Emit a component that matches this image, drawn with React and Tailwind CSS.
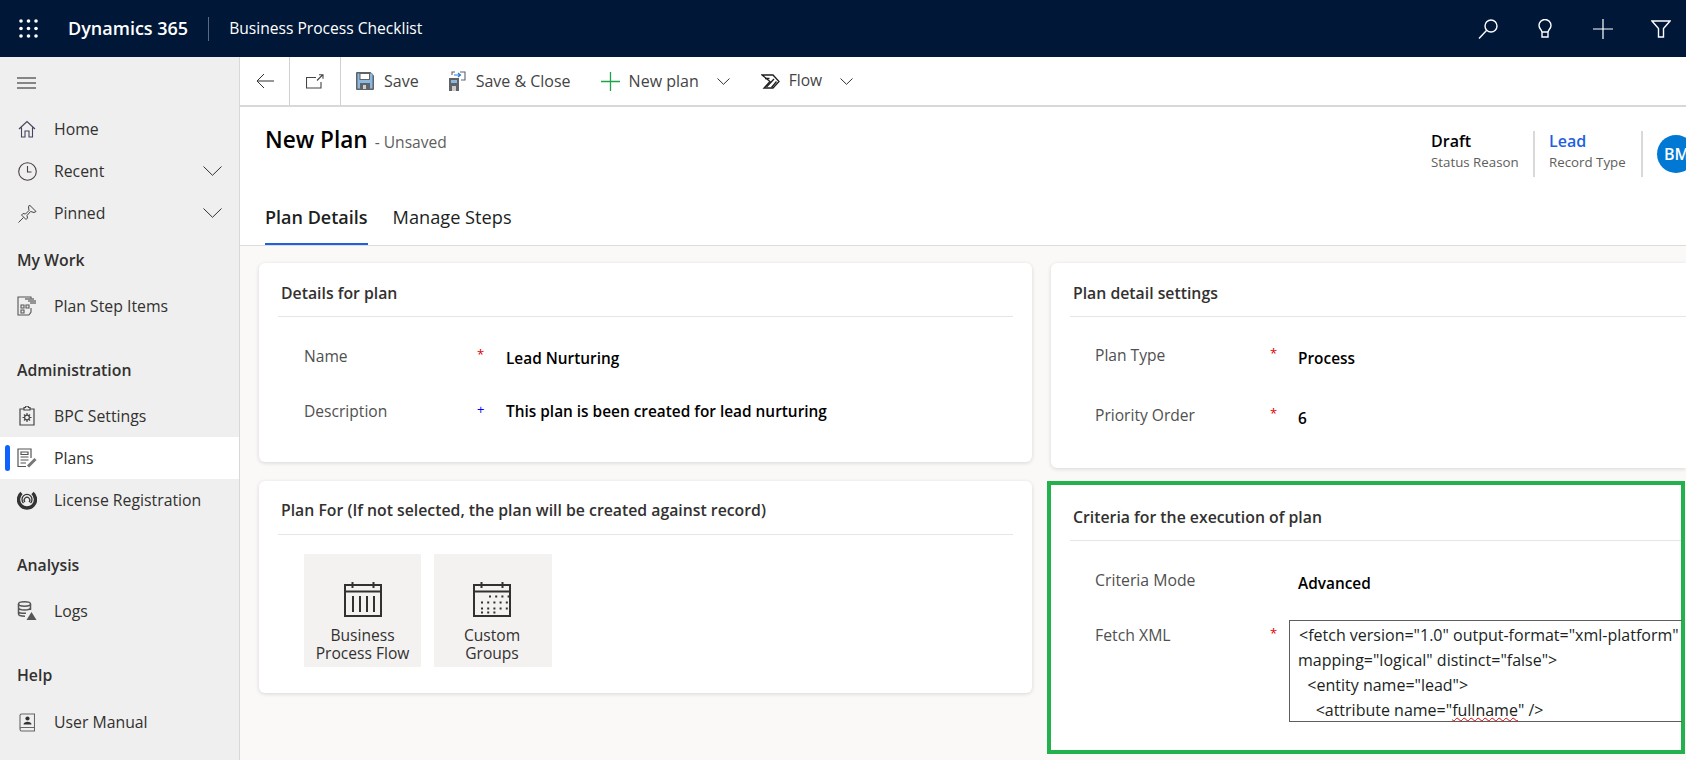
import React from "react";

const F = { fontFamily: '"Open Sans","Noto Sans",sans-serif' };

function Chevron({ w, h }) {
  return (
    <svg width={w} height={h} viewBox={`0 0 ${w} ${h}`} fill="none" stroke="#323130" strokeWidth="1">
      <path d={`M0.5 0.5L${w / 2} ${h - 0.7}L${w - 0.5} 0.5`} />
    </svg>
  );
}

function Calendar({ dots }) {
  return (
    <svg width="38" height="35" viewBox="0 0 38 35" fill="none" stroke="#323130" strokeWidth="2">
      <rect x="1" y="3" width="36" height="31" />
      <path d="M1 9.5H37M8.5 0V6M29.5 0V6" />
      {dots ? (
        <path strokeDasharray="2 4.2" d="M16 14.5H36M8 20.5H36M8 26.5H36M8 30.5H24" />
      ) : (
        <path d="M9 14V30M16 14V30M23 14V30M30 14V30" />
      )}
    </svg>
  );
}

const NavIcon = ({ children }) => (
  <span className="w-[20px] h-[20px] flex items-center justify-center text-[#323130]">{children}</span>
);

function NavItem({ icon, label, chevron, active }) {
  return (
    <div className={`relative flex items-center h-[42px] pl-[17px] pr-[17px] ${active ? "bg-white" : ""}`}>
      {active && <span className="absolute left-[5px] top-[8px] w-[5px] h-[26px] rounded-sm bg-[#0f62fe]" />}
      <NavIcon>{icon}</NavIcon>
      <span className="ml-[17px] mt-[2px] text-[15.8px] text-[#323130] flex-1">{label}</span>
      {chevron && <Chevron w={19} h={10} />}
    </div>
  );
}

const NavHead = ({ children, className = "" }) => (
  <div className={`pl-[17px] text-[15.8px] leading-[24px] font-semibold text-[#323130] ${className}`}>{children}</div>
);

const CardTitle = ({ children, className = "" }) => (
  <div className={`ml-[19px] pl-[3px] border-b border-[#e6e6e6] font-semibold text-[15.8px] leading-[24px] text-[#323130] ${className}`}>
    {children}
  </div>
);

function Row({ label, req, value, labelW, starW, labelClass = "text-[15.6px]", valueClass = "mt-[3px]" }) {
  return (
    <div className="flex items-start">
      <span style={{ width: labelW }} className={`shrink-0 leading-[24px] text-[#505050] ${labelClass}`}>{label}</span>
      <span style={{ width: starW }} className={`shrink-0 text-[13px] leading-[13px] mt-[4px] ${req === "+" ? "text-[#0000ff]" : "text-[#e00000]"}`}>
        {req || ""}
      </span>
      <span className={`text-[15.4px] leading-[24px] font-semibold text-black ${valueClass}`}>{value}</span>
    </div>
  );
}

export default function App() {
  return (
    <div style={F} className="w-[1686px] h-[760px] overflow-hidden flex flex-col bg-[#faf9f8]">
      {/* Top bar */}
      <header className="h-[57px] shrink-0 bg-[#001737] flex items-center text-white">
        <svg className="ml-[19px]" width="19" height="19" viewBox="0 0 19 19" fill="white">
          {[2, 9.5, 17].map((y) =>
            [2, 9.5, 17].map((x) => <circle key={`${x}-${y}`} cx={x} cy={y} r="1.8" />)
          )}
        </svg>
        <span className="ml-[30px] text-[18px] font-semibold">Dynamics 365</span>
        <span className="ml-[20px] w-px h-[24px] bg-[#5a6a80]" />
        <span className="ml-[20px] text-[15.6px]">Business Process Checklist</span>
        <div className="ml-auto flex items-center pr-[15px]">
          <svg width="20" height="20" viewBox="0 0 20 20" fill="none" stroke="white" strokeWidth="1.4">
            <circle cx="13" cy="7" r="6" />
            <path d="M8.5 11.5L1 19.5" />
          </svg>
          <svg className="ml-[40px]" width="14" height="19" viewBox="0 0 14 19" fill="none" stroke="white" strokeWidth="1.4">
            <path d="M4 13C3.5 10.5 1 9.5 1 6.5A6 6 0 0 1 13 6.5C13 9.5 10.5 10.5 10 13M4 13H10M4 13V18H10V13" />
          </svg>
          <svg className="ml-[41px]" width="20" height="20" viewBox="0 0 20 20" stroke="white" strokeWidth="1.2">
            <path d="M0 10H20M10 0V20" />
          </svg>
          <svg className="ml-[38px]" width="20" height="18" viewBox="0 0 20 18" fill="none" stroke="white" strokeWidth="1.4">
            <path d="M1 1H19L12.5 8.5V17H7.5V8.5Z" />
          </svg>
        </div>
      </header>

      <div className="flex-1 flex min-h-0">
        {/* Sidebar */}
        <aside className="w-[240px] shrink-0 bg-[#efefef] border-r border-[#d8d8d8] flex flex-col">
          <div className="h-[51px] pl-[17px] flex items-center">
            <svg width="19" height="12" viewBox="0 0 19 12" stroke="#201f1e" strokeWidth="1.1">
              <path d="M0 1H19M0 6H19M0 11H19" />
            </svg>
          </div>
          <NavItem
            label="Home"
            icon={
              <svg width="18" height="18" viewBox="0 0 18 18" fill="none" stroke="#4a4060" strokeWidth="1.1">
                <path d="M1 9L9 1.5L17 9M3.5 7.5V17H7V11H11V17H14.5V7.5" />
              </svg>
            }
          />
          <NavItem
            label="Recent"
            chevron
            icon={
              <svg width="19" height="19" viewBox="0 0 19 19" fill="none" stroke="#4a4040" strokeWidth="1.1">
                <circle cx="9.5" cy="9.5" r="8.8" />
                <path d="M9.5 4V10H13.5" />
              </svg>
            }
          />
          <NavItem
            label="Pinned"
            chevron
            icon={
              <svg width="19" height="19" viewBox="0 0 19 19" fill="none" stroke="#4a4040" strokeWidth="1">
                <path d="M11.5 1L18 7.5L16 8.5L12.5 7.5L9 11.5L9.5 14L8 15.5L3.5 11L5 9.5L7.5 10L11 6.5L10.5 3Z" />
                <path d="M5.5 13.5L0.5 18.5" />
              </svg>
            }
          />
          <NavHead className="mt-[14px] mb-[13px]">My Work</NavHead>
          <NavItem
            label="Plan Step Items"
            icon={
              <svg width="20" height="20" viewBox="0 0 20 20" fill="none" stroke="#555" strokeWidth="1.1">
                <path d="M12 19H1V1H14V3M14 12V16L12 19" />
                <path d="M4 9H7V12H4ZM9 9H12V12H9ZM4 14H7V17H4Z" />
                <path d="M8 3H17M11 5H19M13 7H19" strokeWidth="1.4" stroke="#777" />
              </svg>
            }
          />
          <NavHead className="mt-[31px] mb-[13px]">Administration</NavHead>
          <NavItem
            label="BPC Settings"
            icon={
              <svg width="16" height="20" viewBox="0 0 16 20" fill="none" stroke="#444" strokeWidth="1.2">
                <path d="M5 3H1V19H15V3H11M5 4V1.5H6.5A1.5 1.5 0 0 1 9.5 1.5H11V4Z" />
                <circle cx="8" cy="11.5" r="2.4" />
                <path d="M8 7V9M8 14V16M3.5 11.5H5.5M10.5 11.5H12.5M5 8.5L6.3 9.8M9.7 13.2L11 14.5M11 8.5L9.7 9.8M6.3 13.2L5 14.5" />
              </svg>
            }
          />
          <NavItem
            active
            label="Plans"
            icon={
              <svg width="20" height="20" viewBox="0 0 20 20" fill="none" stroke="#555" strokeWidth="1.2">
                <path d="M14 10V1H1V18.5H9" />
                <path d="M4 4H11V6.5H4ZM3.5 9H11.5M3.5 12H11.5M3.5 15H9" />
                <path d="M11 18.5L18.5 11" strokeWidth="3" stroke="#777" />
              </svg>
            }
          />
          <NavItem
            label="License Registration"
            icon={
              <svg width="20" height="20" viewBox="0 0 20 20" fill="none" stroke="#333">
                <path d="M4.5 3A8.5 8.5 0 1 0 15.5 3" strokeWidth="3.4" />
                <path d="M6.5 13A5 5 0 1 1 13.5 13" strokeWidth="1.3" />
                <path d="M8 12A2.8 2.8 0 1 1 12 12" strokeWidth="1.2" />
              </svg>
            }
          />
          <NavHead className="mt-[32px] mb-[13px]">Analysis</NavHead>
          <NavItem
            label="Logs"
            icon={
              <svg width="20" height="20" viewBox="0 0 20 20" fill="none" stroke="#555" strokeWidth="1.5">
                <ellipse cx="7.5" cy="3" rx="6" ry="2.2" />
                <path d="M1.5 3V13C1.5 14.5 4.5 15.2 8 15.2M13.5 3V9M1.5 6.5C1.5 8 4.5 9 7.5 9S13.5 8 13.5 6.5M1.5 10.5C1.5 12 4.5 12.5 9 12.2" />
                <path d="M14.5 11L19.5 19H9.5Z" fill="#555" stroke="none" />
              </svg>
            }
          />
          <NavHead className="mt-[31px] mb-[14px]">Help</NavHead>
          <NavItem
            label="User Manual"
            icon={
              <svg width="16" height="19" viewBox="0 0 16 19" fill="none" stroke="#666" strokeWidth="1.1">
                <path d="M2.5 1H15.5V18H2.5C0.5 18 0.5 14.5 2.5 14.5H15.5M1 16V2.5C1 1.5 1.8 1 2.5 1" />
                <circle cx="8.5" cy="5.5" r="2.1" fill="#333" stroke="none" />
                <path d="M4.5 11.5C4.5 7.8 12.5 7.8 12.5 11.5Z" fill="#333" stroke="none" />
              </svg>
            }
          />
        </aside>

        {/* Main */}
        <main className="flex-1 min-w-0 flex flex-col">
          <div className="h-[50px] shrink-0 bg-white border-b-2 border-[#d8d8d8] flex items-center text-[16px] text-[#444]">
            <div className="w-[50px] h-full flex items-center pl-[16px] border-r border-[#d0d0d0]">
              <svg width="18" height="16" viewBox="0 0 18 16" fill="none" stroke="#323130" strokeWidth="1">
                <path d="M18 8H1M8 1L1 8L8 15" />
              </svg>
            </div>
            <div className="w-[51px] h-full flex items-center pl-[16px] border-r border-[#d0d0d0]">
              <svg width="18" height="15" viewBox="0 0 18 15" fill="none" stroke="#444" strokeWidth="1.1">
                <path d="M10 3.5H0.5V14H15V8M11 6.5L16.5 1M13 0.7H17V4.7" />
              </svg>
            </div>
            <svg className="ml-[15px]" width="18" height="18" viewBox="0 0 18 18">
              <path d="M1 0H14.5L18 3.5V17A1 1 0 0 1 17 18H1A1 1 0 0 1 0 17V1A1 1 0 0 1 1 0Z" fill="#5f6368" />
              <rect x="1.5" y="1.5" width="15" height="15" fill="#8ab8de" />
              <rect x="4" y="1.5" width="9.5" height="6" fill="#fff" stroke="#5f6368" strokeWidth="1" />
              <rect x="4" y="11" width="10" height="6" fill="#5f6368" />
              <rect x="7" y="13" width="3" height="4" fill="#ccc" />
            </svg>
            <span className="ml-[10px]">Save</span>
            <svg className="ml-[29px]" width="18" height="20" viewBox="0 0 18 20">
              <rect x="1" y="7" width="10" height="13" fill="#5f6368" />
              <rect x="3" y="9" width="6" height="3" fill="#8ab8de" />
              <rect x="4" y="15" width="4" height="5" fill="#ccc" />
              <path d="M4 4V1H7M12 1H17V9H13" fill="none" stroke="#5f6368" strokeWidth="1.1" />
              <path d="M6 4H12M10 2L12.5 4L10 6" fill="none" stroke="#2b7cd3" strokeWidth="1.2" />
            </svg>
            <span className="ml-[10px]">Save &amp; Close</span>
            <svg className="ml-[30px]" width="19" height="19" viewBox="0 0 19 19" stroke="#1fa34a" strokeWidth="1.3">
              <path d="M0 9.5H19M9.5 0V19" />
            </svg>
            <span className="ml-[9px]">New plan</span>
            <span className="ml-[18px]"><Chevron w={13} h={7} /></span>
            <svg className="ml-[31px]" width="19" height="15" viewBox="0 0 19 15" fill="none" stroke="#201f1e" strokeWidth="1.3">
              <path d="M1 1H12L18 7.5L12 14H3L9 7.5Z" />
              <path d="M4 4.5H8.5M13 5L5.5 13M15.5 7.5L10.5 13.5" />
            </svg>
            <span className="ml-[9px] text-[15.6px]">Flow</span>
            <span className="ml-[18px]"><Chevron w={13} h={7} /></span>
          </div>

          <div className="h-[139px] shrink-0 bg-white border-b border-[#dcdcdc] relative">
            <div className="pl-[25px] pt-[18px] flex items-baseline leading-[30px]">
              <span className="text-[22.6px] font-semibold text-black">New Plan</span>
              <span className="ml-[7px] text-[15.6px] text-[#605e5c]">- Unsaved</span>
            </div>
            <div className="absolute right-0 top-[24px] flex items-stretch w-[255px] h-[46px] overflow-hidden">
              <div className="w-[102px] shrink-0 leading-[1.2] pt-[1px]">
                <div className="text-[16px] font-semibold text-black">Draft</div>
                <div className="text-[13.3px] text-[#605e5c] mt-[4px]">Status Reason</div>
              </div>
              <div className="w-[2px] shrink-0 bg-[#d9d9d9]" />
              <div className="pl-[14px] w-[106px] shrink-0 leading-[1.2] pt-[1px]">
                <div className="text-[16px] font-semibold text-[#1f5fe0]">Lead</div>
                <div className="text-[13.3px] text-[#605e5c] mt-[4px]">Record Type</div>
              </div>
              <div className="w-[2px] shrink-0 bg-[#d9d9d9]" />
              <div className="ml-[14px] mt-[4px] w-[38px] h-[38px] rounded-full shrink-0 bg-[#0078d4] text-white font-semibold text-[16px] flex items-center pl-[7px] overflow-hidden">
                BM
              </div>
            </div>
            <div className="absolute left-[25px] bottom-0 flex gap-[25px] text-[18.2px] leading-[27px] text-[#201f1e]">
              <div className="h-[46px] pt-[5px] font-semibold text-[18px] border-b-[2px] border-[#1f5fe0]">Plan Details</div>
              <div className="h-[46px] pt-[5px]">Manage Steps</div>
            </div>
          </div>

          <div className="flex-1 min-h-0 flex gap-[19px] pl-[19px] pt-[17px]">
            <div className="w-[773px] shrink-0 flex flex-col gap-[19px]">
              <section className="h-[199px] bg-white rounded-md shadow-[0_1px_4px_rgba(0,0,0,0.14)] pt-[18px]">
                <CardTitle className="pb-[11px] mr-[19px]">Details for plan</CardTitle>
                <div className="pl-[45px] pt-[27px] flex flex-col gap-[28px]">
                  <Row labelW={173} starW={29} label="Name" req="*" value="Lead Nurturing" />
                  <Row
                    labelW={173}
                    starW={29}
                    valueClass="mt-[1px]"
                    label="Description"
                    req="+"
                    value="This plan is been created for lead nurturing"
                  />
                </div>
              </section>
              <section className="h-[212px] bg-white rounded-md shadow-[0_1px_4px_rgba(0,0,0,0.14)] pt-[17px]">
                <CardTitle className="pb-[12px] mr-[19px]">Plan For (If not selected, the plan will be created against record)</CardTitle>
                <div className="pl-[45px] pt-[19px] flex gap-[13px] text-[15.6px] leading-[18px] text-[#323130] text-center">
                  <div className="w-[117px] h-[113px] bg-[#f3f2f1] flex flex-col items-center pt-[28px]">
                    <Calendar />
                    <div className="mt-[9px]">Business<br />Process Flow</div>
                  </div>
                  <div className="w-[118px] h-[113px] bg-[#f3f2f1] flex flex-col items-center pt-[28px] pr-[2px]">
                    <Calendar dots />
                    <div className="mt-[9px]">Custom<br />Groups</div>
                  </div>
                </div>
              </section>
            </div>

            <div className="flex-1 min-w-0 flex flex-col">
              <section className="h-[205px] shrink-0 bg-white rounded-l-md shadow-[0_1px_4px_rgba(0,0,0,0.14)] pt-[18px]">
                <CardTitle className="pb-[11px]">Plan detail settings</CardTitle>
                <div className="pl-[44px] pt-[26px] flex flex-col gap-[32px]">
                  <Row labelW={175} starW={28} valueClass="mt-[4px]" label="Plan Type" req="*" value="Process" />
                  <Row labelW={175} starW={28} valueClass="mt-[4px]" label="Priority Order" req="*" value="6" />
                </div>
              </section>
              <section className="-ml-[4px] mr-[1px] mt-[13px] h-[273px] bg-white border-[4px] border-[#22b14c] pt-[20px]">
                <CardTitle className="pb-[11px]">Criteria for the execution of plan</CardTitle>
                <div className="pt-[27px] pl-[44px] flex flex-col">
                  <Row labelW={175} starW={28} valueClass="mt-[4px]" labelClass="text-[15.8px]" label="Criteria Mode" value="Advanced" />
                  <div className="flex items-start mt-[24px]">
                    <span className="w-[175px] shrink-0 leading-[24px] text-[15.8px] text-[#505050] mt-[3px]">Fetch XML</span>
                    <span className="w-[19px] shrink-0 text-[13px] leading-[13px] text-[#e00000] mt-[7px]">*</span>
                    <div className="w-[393px] h-[102px] shrink-0 border border-r-0 border-[#605e5c] overflow-hidden pl-[9px] pt-[2px] text-[16px] leading-[25px] text-[#201f1e] whitespace-pre">
                      <div>{'<fetch version="1.0" output-format="xml-platform"'}</div>
                      <div className="-ml-[1px]">{'mapping="logical" distinct="false">'}</div>
                      <div>{'  <entity name="lead">'}</div>
                      <div>{'    <attribute name="'}<span className="underline decoration-wavy decoration-[#e00000] decoration-1">fullname</span>{'" />'}</div>
                    </div>
                  </div>
                </div>
              </section>
            </div>
          </div>
        </main>
      </div>
    </div>
  );
}
